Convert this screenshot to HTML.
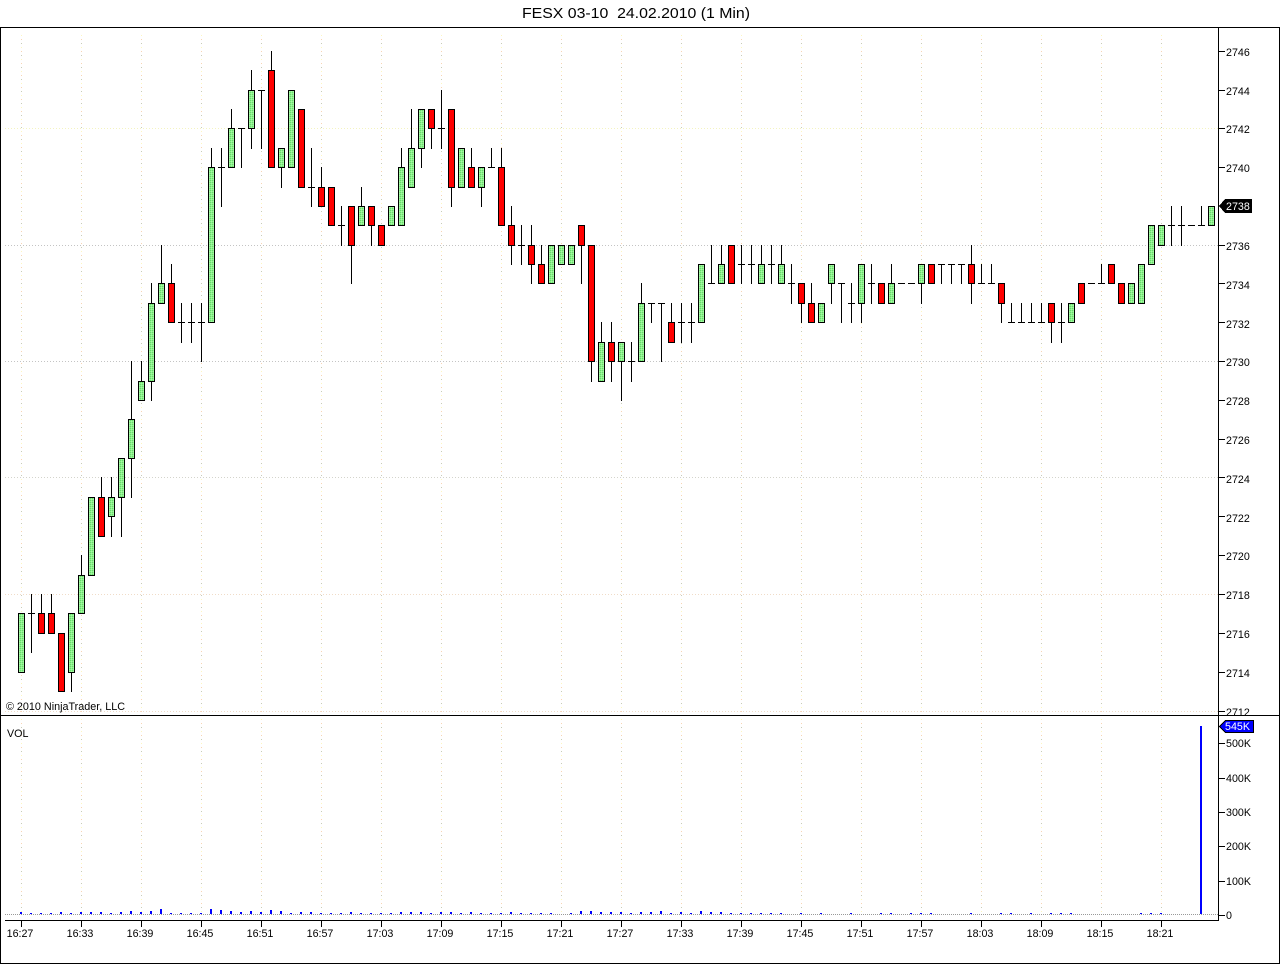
<!DOCTYPE html>
<html><head><meta charset="utf-8"><title>FESX 03-10</title>
<style>
html,body{margin:0;padding:0;background:#fff;width:1280px;height:964px;overflow:hidden}
svg{display:block}
text{font-family:"Liberation Sans",Arial,sans-serif;font-size:10.7px;fill:#000}
</style></head><body>
<svg width="1280" height="964" viewBox="0 0 1280 964" xmlns="http://www.w3.org/2000/svg">
<defs><pattern id="g" width="2" height="2" patternUnits="userSpaceOnUse"><rect width="2" height="2" fill="#8ef08e"/><rect width="1" height="1" fill="#68dc68"/><rect x="1" y="1" width="1" height="1" fill="#a8f8a8"/></pattern></defs>
<rect width="1280" height="964" fill="#fff"/>
<text x="522" y="18" xml:space="preserve" textLength="228" lengthAdjust="spacingAndGlyphs" style="font-size:15.2px">FESX 03-10  24.02.2010 (1 Min)</text>

<g shape-rendering="crispEdges">
<!-- horizontal grid -->
<g fill="none" stroke-dasharray="1 2">
<path d="M5 128.5H1218" stroke="#f4f4c0"/>
<path d="M5 245.5H1218M5 361.5H1218" stroke="#c4c4c4"/>
<path d="M5 477.5H1218" stroke="#d4d4cc"/>
<path d="M5 594.5H1218M5 711.5H1218" stroke="#f0dcc8"/>
</g>
<!-- vertical grid -->
<g fill="none" stroke-dasharray="1 11">
<path id="v" stroke="#fdf6c0" stroke-dashoffset="0" d="M21.5 35V914M81.5 35V914M141.5 35V914M201.5 35V914M261.5 35V914M321.5 35V914M381.5 35V914M441.5 35V914M501.5 35V914M561.5 35V914M621.5 35V914M681.5 35V914M741.5 35V914M801.5 35V914M861.5 35V914M921.5 35V914M981.5 35V914M1041.5 35V914M1101.5 35V914M1161.5 35V914"/>
<path stroke="#f8d4b4" stroke-dashoffset="-4" d="M21.5 35V914M81.5 35V914M141.5 35V914M201.5 35V914M261.5 35V914M321.5 35V914M381.5 35V914M441.5 35V914M501.5 35V914M561.5 35V914M621.5 35V914M681.5 35V914M741.5 35V914M801.5 35V914M861.5 35V914M921.5 35V914M981.5 35V914M1041.5 35V914M1101.5 35V914M1161.5 35V914"/>
<path stroke="#c8ccb8" stroke-dashoffset="-8" d="M21.5 35V914M81.5 35V914M141.5 35V914M201.5 35V914M261.5 35V914M321.5 35V914M381.5 35V914M441.5 35V914M501.5 35V914M561.5 35V914M621.5 35V914M681.5 35V914M741.5 35V914M801.5 35V914M861.5 35V914M921.5 35V914M981.5 35V914M1041.5 35V914M1101.5 35V914M1161.5 35V914"/>
</g>

<!-- volume bars -->
<path fill="none" stroke="#0000ff" stroke-width="2" d="M21 914v-2M31 914v-1M41 914v-1M51 914v-1M61 914v-2M71 914v-1M81 914v-2M91 914v-2M101 914v-2M111 914v-1M121 914v-2M131 914v-3M141 914v-2M151 914v-3M161 914v-5M171 914v-1M181 914v-1M191 914v-1M201 914v-1M211 914v-5M221 914v-4M231 914v-3M241 914v-2M251 914v-3M261 914v-2M271 914v-4M281 914v-3M291 914v-1M301 914v-2M311 914v-2M321 914v-1M331 914v-1M341 914v-1M351 914v-2M361 914v-1M371 914v-1M381 914v-1M391 914v-1M401 914v-2M411 914v-2M421 914v-2M431 914v-1M441 914v-2M451 914v-2M461 914v-1M471 914v-2M481 914v-1M491 914v-1M501 914v-1M511 914v-2M521 914v-1M531 914v-1M541 914v-1M551 914v-1M571 914v-1M581 914v-3M591 914v-3M601 914v-2M611 914v-2M621 914v-2M631 914v-1M641 914v-2M651 914v-2M661 914v-3M671 914v-1M681 914v-2M691 914v-1M701 914v-3M711 914v-2M721 914v-2M731 914v-1M741 914v-1M751 914v-1M761 914v-1M771 914v-1M781 914v-1M801 914v-1M821 914v-1M851 914v-1M881 914v-1M891 914v-1M911 914v-1M921 914v-1M931 914v-1M971 914v-1M1001 914v-1M1011 914v-1M1031 914v-1M1051 914v-1M1061 914v-1M1071 914v-1M1141 914v-1M1151 914v-1M1161 914v-1M1201 914V726"/>
<path d="M5 914.5H1218" stroke="#999" stroke-dasharray="1 1" fill="none"/>

<!-- wicks -->
<path fill="none" stroke="#000" d="M31.5 594V653M41.5 594V633M51.5 594V633M71.5 613V692M81.5 555V613M101.5 477V537M111.5 477V537M121.5 458V537M131.5 361V498M141.5 361V400M151.5 283V401M161.5 245V303M171.5 264V322M181.5 303V343M191.5 303V343M201.5 303V362M211.5 148V322M221.5 148V207M231.5 109V167M241.5 128V168M251.5 70V149M261.5 90V149M271.5 51V167M281.5 148V188M311.5 148V207M321.5 167V206M341.5 206V246M351.5 206V284M361.5 187V225M371.5 206V246M401.5 148V225M411.5 109V187M421.5 109V168M431.5 109V149M441.5 90V149M451.5 109V207M471.5 148V187M481.5 167V207M491.5 148V168M501.5 148V225M511.5 206V265M521.5 225V265M531.5 225V284M541.5 245V283M581.5 225V284M591.5 245V382M601.5 322V381M611.5 322V382M621.5 342V401M631.5 342V382M641.5 283V361M651.5 303V323M661.5 303V362M671.5 303V342M681.5 303V343M691.5 303V343M711.5 245V284M721.5 245V283M741.5 245V284M751.5 245V284M761.5 245V283M771.5 245V284M781.5 245V283M791.5 264V304M801.5 283V323M811.5 283V322M831.5 264V304M841.5 283V323M851.5 283V323M861.5 264V323M871.5 264V304M891.5 264V303M921.5 264V304M941.5 264V284M951.5 264V284M961.5 264V284M971.5 245V304M981.5 264V284M991.5 264V284M1001.5 283V323M1011.5 303V323M1021.5 303V323M1031.5 303V323M1041.5 303V323M1051.5 303V343M1061.5 303V343M1101.5 264V284M1171.5 206V246M1181.5 206V246M1201.5 206V226"/>
<!-- doji -->
<path fill="none" stroke="#000" d="M28 613.5h7M178 322.5h7M188 322.5h7M198 322.5h7M218 167.5h7M238 128.5h7M258 90.5h7M308 187.5h7M338 225.5h7M438 128.5h7M488 167.5h7M518 245.5h7M628 361.5h7M648 303.5h7M658 303.5h7M678 322.5h7M688 322.5h7M708 283.5h7M738 264.5h7M748 264.5h7M768 264.5h7M788 283.5h7M838 283.5h7M848 303.5h7M868 283.5h7M898 283.5h7M908 283.5h7M938 264.5h7M948 264.5h7M958 264.5h7M978 283.5h7M988 283.5h7M1008 322.5h7M1018 322.5h7M1028 322.5h7M1038 322.5h7M1058 322.5h7M1088 283.5h7M1098 283.5h7M1168 225.5h7M1178 225.5h7M1188 225.5h7M1198 225.5h7"/>
<!-- green bodies -->
<path fill="url(#g)" stroke="#000" d="M18.5 613.5h6v59h-6zM68.5 613.5h6v59h-6zM78.5 575.5h6v38h-6zM88.5 497.5h6v78h-6zM108.5 497.5h6v19h-6zM118.5 458.5h6v39h-6zM128.5 419.5h6v39h-6zM138.5 381.5h6v19h-6zM148.5 303.5h6v78h-6zM158.5 283.5h6v20h-6zM208.5 167.5h6v155h-6zM228.5 128.5h6v39h-6zM248.5 90.5h6v38h-6zM278.5 148.5h6v19h-6zM288.5 90.5h6v77h-6zM358.5 206.5h6v19h-6zM388.5 206.5h6v19h-6zM398.5 167.5h6v58h-6zM408.5 148.5h6v39h-6zM418.5 109.5h6v39h-6zM458.5 148.5h6v39h-6zM478.5 167.5h6v20h-6zM548.5 245.5h6v38h-6zM558.5 245.5h6v19h-6zM568.5 245.5h6v19h-6zM598.5 342.5h6v39h-6zM618.5 342.5h6v19h-6zM638.5 303.5h6v58h-6zM698.5 264.5h6v58h-6zM718.5 264.5h6v19h-6zM758.5 264.5h6v19h-6zM778.5 264.5h6v19h-6zM818.5 303.5h6v19h-6zM828.5 264.5h6v19h-6zM858.5 264.5h6v39h-6zM888.5 283.5h6v20h-6zM918.5 264.5h6v19h-6zM1068.5 303.5h6v19h-6zM1128.5 283.5h6v20h-6zM1138.5 264.5h6v39h-6zM1148.5 225.5h6v39h-6zM1158.5 225.5h6v20h-6zM1208.5 206.5h6v19h-6z"/>
<!-- red bodies -->
<path fill="#ff0000" stroke="#000" d="M38.5 613.5h6v20h-6zM48.5 613.5h6v20h-6zM58.5 633.5h6v58h-6zM98.5 497.5h6v39h-6zM168.5 283.5h6v39h-6zM268.5 70.5h6v97h-6zM298.5 109.5h6v78h-6zM318.5 187.5h6v19h-6zM328.5 187.5h6v38h-6zM348.5 206.5h6v39h-6zM368.5 206.5h6v19h-6zM378.5 225.5h6v20h-6zM428.5 109.5h6v19h-6zM448.5 109.5h6v78h-6zM468.5 167.5h6v20h-6zM498.5 167.5h6v58h-6zM508.5 225.5h6v20h-6zM528.5 245.5h6v19h-6zM538.5 264.5h6v19h-6zM578.5 225.5h6v20h-6zM588.5 245.5h6v116h-6zM608.5 342.5h6v19h-6zM668.5 322.5h6v20h-6zM728.5 245.5h6v38h-6zM798.5 283.5h6v20h-6zM808.5 303.5h6v19h-6zM878.5 283.5h6v20h-6zM928.5 264.5h6v19h-6zM968.5 264.5h6v19h-6zM998.5 283.5h6v20h-6zM1048.5 303.5h6v19h-6zM1078.5 283.5h6v20h-6zM1108.5 264.5h6v19h-6zM1118.5 283.5h6v20h-6z"/>

<!-- frame + axes -->
<path fill="none" stroke="#000" d="M0 27.5H1280M0.5 27V964M0 963.5H1280M1279.5 27V964M0 715.5H1280M1218.5 27V920M5 920.5H1219"/>
<!-- right ticks -->
<path fill="none" stroke="#000" d="M1219 51.5h6M1219 90.5h6M1219 128.5h6M1219 167.5h6M1219 245.5h6M1219 283.5h6M1219 322.5h6M1219 361.5h6M1219 400.5h6M1219 439.5h6M1219 477.5h6M1219 516.5h6M1219 555.5h6M1219 594.5h6M1219 633.5h6M1219 672.5h6M1219 711.5h6M1219 743.5h6M1219 778.5h6M1219 812.5h6M1219 846.5h6M1219 881.5h6M1219 915.5h6"/>
<!-- time ticks -->
<path fill="none" stroke="#000" d="M21.5 920v7M81.5 920v7M141.5 920v7M201.5 920v7M261.5 920v7M321.5 920v7M381.5 920v7M441.5 920v7M501.5 920v7M561.5 920v7M621.5 920v7M681.5 920v7M741.5 920v7M801.5 920v7M861.5 920v7M921.5 920v7M981.5 920v7M1041.5 920v7M1101.5 920v7M1161.5 920v7"/>
<!-- flags -->
<path fill="#000" d="M1219 206l6-7h27v14h-27z"/>
<path fill="#0000ff" stroke="#000" d="M1219.5 726.5l6-6h28v12h-28z"/>
</g>

<!-- price labels -->
<text x="1226" y="56">2746</text>
<text x="1226" y="95">2744</text>
<text x="1226" y="133">2742</text>
<text x="1226" y="172">2740</text>
<text x="1226" y="250">2736</text>
<text x="1226" y="289">2734</text>
<text x="1226" y="328">2732</text>
<text x="1226" y="366">2730</text>
<text x="1226" y="405">2728</text>
<text x="1226" y="444">2726</text>
<text x="1226" y="483">2724</text>
<text x="1226" y="522">2722</text>
<text x="1226" y="560">2720</text>
<text x="1226" y="599">2718</text>
<text x="1226" y="638">2716</text>
<text x="1226" y="677">2714</text>
<text x="1226" y="716">2712</text>
<text x="1226" y="210" style="fill:#fff">2738</text>
<text x="1225" y="730" style="fill:#fff">545K</text>
<text x="1226" y="747">500K</text>
<text x="1226" y="782">400K</text>
<text x="1226" y="816">300K</text>
<text x="1226" y="850">200K</text>
<text x="1226" y="885">100K</text>
<text x="1226" y="919">0</text>
<text x="7" y="737">VOL</text>
<text x="6" y="710" textLength="119" lengthAdjust="spacingAndGlyphs">© 2010 NinjaTrader, LLC</text>
<!-- time labels -->
<g text-anchor="middle">
<text x="20" y="937">16:27</text>
<text x="80" y="937">16:33</text>
<text x="140" y="937">16:39</text>
<text x="200" y="937">16:45</text>
<text x="260" y="937">16:51</text>
<text x="320" y="937">16:57</text>
<text x="380" y="937">17:03</text>
<text x="440" y="937">17:09</text>
<text x="500" y="937">17:15</text>
<text x="560" y="937">17:21</text>
<text x="620" y="937">17:27</text>
<text x="680" y="937">17:33</text>
<text x="740" y="937">17:39</text>
<text x="800" y="937">17:45</text>
<text x="860" y="937">17:51</text>
<text x="920" y="937">17:57</text>
<text x="980" y="937">18:03</text>
<text x="1040" y="937">18:09</text>
<text x="1100" y="937">18:15</text>
<text x="1160" y="937">18:21</text>
</g>
</svg>
</body></html>
